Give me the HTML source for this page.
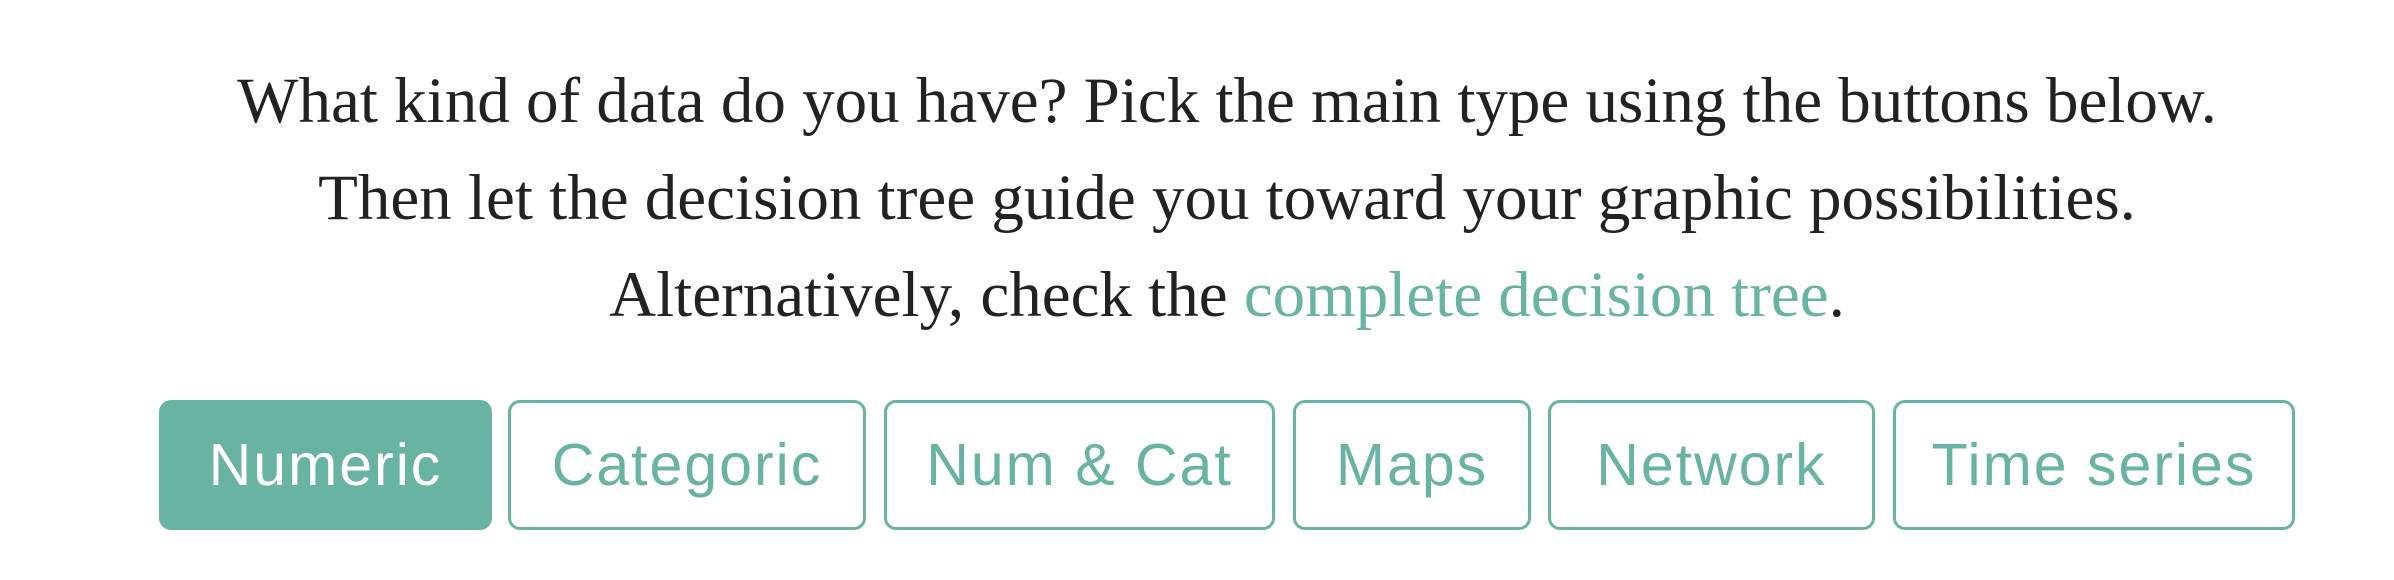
<!DOCTYPE html>
<html><head><style>
html,body{margin:0;padding:0;background:#fff;width:2394px;height:580px;overflow:hidden}
.t{position:absolute;left:30px;width:2394px;text-align:center;font-family:"Liberation Serif",serif;font-size:65px;color:#222;line-height:1}
.t a{color:#69b3a2;text-decoration:none}
.b{position:absolute;top:400px;height:130px;box-sizing:border-box;border:3px solid #69b3a2;border-radius:12px;color:#69b3a2;font-family:"Liberation Sans",sans-serif;font-size:59px;letter-spacing:2px;display:flex;align-items:center;justify-content:center;background:#fff}
.b.on{background:#69b3a2;color:#fff}
</style></head><body>
<div class="t" style="top:69px">What kind of data do you have? Pick the main type using the buttons below.</div>
<div class="t" style="top:166px">Then let the decision tree guide you toward your graphic possibilities.</div>
<div class="t" style="top:263px">Alternatively, check the <a>complete decision tree</a>.</div>
<div class="b on" style="left:159px;width:333px">Numeric</div>
<div class="b" style="left:508px;width:358px">Categoric</div>
<div class="b" style="left:884px;width:391px">Num &amp; Cat</div>
<div class="b" style="left:1293px;width:238px">Maps</div>
<div class="b" style="left:1548px;width:327px">Network</div>
<div class="b" style="left:1893px;width:402px">Time series</div>
</body></html>
